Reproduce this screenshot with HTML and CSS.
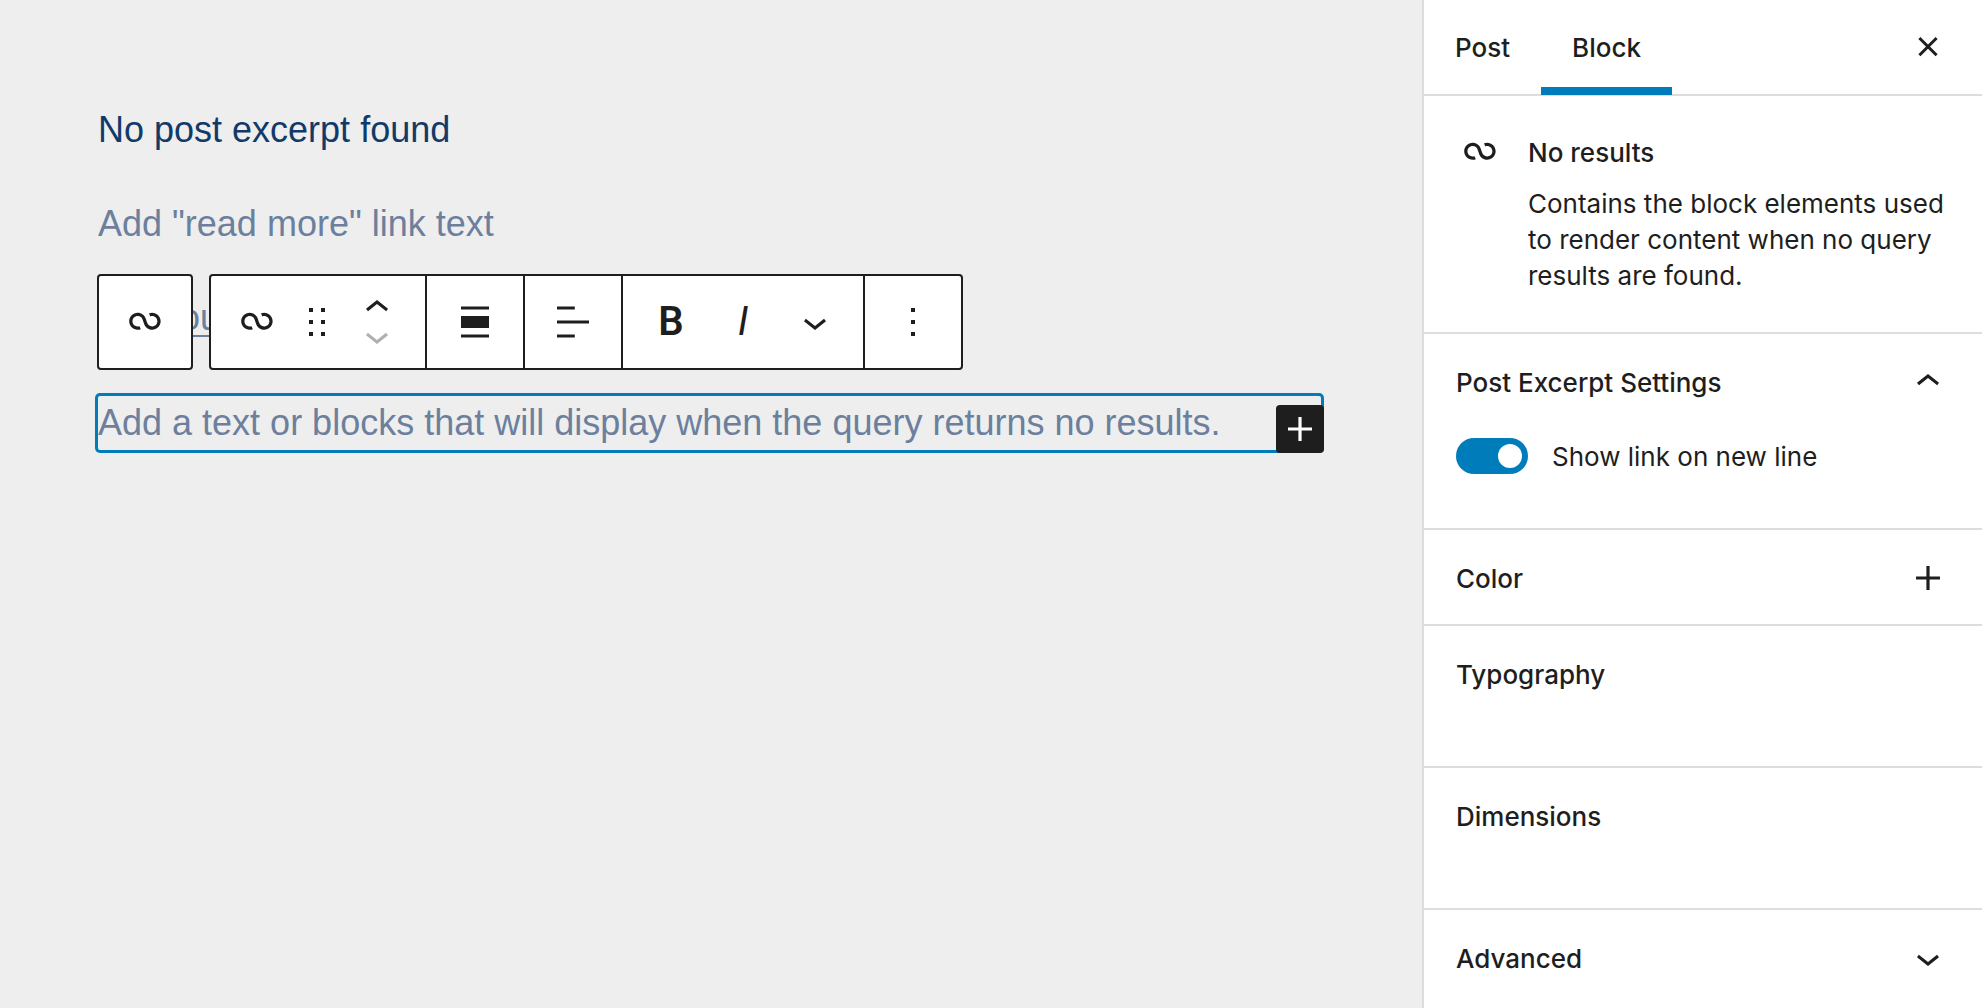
FILE: index.html
```
<!DOCTYPE html>
<html lang="en">
<head>
  <meta charset="UTF-8">
  <title>Edit Post</title>
  <link rel="stylesheet" href="styles.css">
</head>
<body>

  <div class="editor">
    <main class="canvas">
      <p class="excerpt">No post excerpt found</p>
      <p class="placeholder">Add "read more" link text</p>

      <div class="pagination">
        <a href="#" class="page-link">Previous Page</a>

        <!-- Block toolbar floats over the pagination links -->
        <div class="toolbars">
          <div class="toolbar">
            <button class="tool parent" aria-label="Select parent block">
              <svg class="icon" viewBox="0 0 24 24"><use href="#loop"/></svg>
            </button>
          </div>
          <div class="toolbar">
            <div class="group block-group">
              <button class="tool" aria-label="No results">
                <svg class="icon" viewBox="0 0 24 24"><use href="#loop"/></svg>
              </button>
              <button class="tool" aria-label="Drag">
                <svg class="icon" viewBox="0 0 24 24"><path d="M8 7h2V5H8v2zm0 6h2v-2H8v2zm0 6h2v-2H8v2zm6-14v2h2V5h-2zm0 8h2v-2h-2v2zm0 6h2v-2h-2v2z"/></svg>
              </button>
              <div class="movers">
                <button class="mover" aria-label="Move up">
                  <svg class="chevron" viewBox="6 7 12 8"><path d="M6.5 12.4L12 8l5.5 4.4-.9 1.2L12 10l-4.5 3.6-1-1.2z"/></svg>
                </button>
                <button class="mover" aria-label="Move down" disabled>
                  <svg class="chevron" viewBox="6 9 12 8"><path d="M17.5 11.6L12 16l-5.5-4.4.9-1.2L12 14l4.5-3.6 1 1.2z"/></svg>
                </button>
              </div>
            </div>
            <div class="group">
              <button class="tool wide" aria-label="Align">
                <svg class="icon" viewBox="0 0 24 24"><path d="M5 15h14V9H5v6zm0 4.75h14v-1.5H5v1.5zM5 4.25v1.5h14v-1.5H5z"/></svg>
              </button>
            </div>
            <div class="group">
              <button class="tool wide" aria-label="Align text">
                <svg class="icon" viewBox="0 0 24 24"><path d="M4 19.75h8.9v-1.5H4v1.5zm8.9-15.5H4v1.5h8.9v-1.5zM4 11.25v1.5h16v-1.5H4z"/></svg>
              </button>
            </div>
            <div class="group format-group">
              <button class="tool letter bold" aria-label="Bold">B</button>
              <button class="tool letter italic" aria-label="Italic">I</button>
              <button class="tool" aria-label="More formatting">
                <svg class="icon" viewBox="0 0 24 24"><use href="#chevron-down"/></svg>
              </button>
            </div>
            <div class="group">
              <button class="tool wide" aria-label="Options">
                <svg class="icon" viewBox="0 0 24 24"><path d="M13 19h-2v-2h2v2zm0-6h-2v-2h2v2zm0-6h-2V5h2v2z"/></svg>
              </button>
            </div>
          </div>
        </div>
      </div>

      <div class="selected-block">
        <p class="placeholder">Add a text or blocks that will display when the query returns no results.</p>
        <button class="inserter" aria-label="Add block">
          <svg class="icon" viewBox="0 0 24 24"><use href="#plus"/></svg>
        </button>
      </div>
    </main>

    <aside class="sidebar">
      <header class="tabs">
        <button class="tab">Post</button>
        <button class="tab active">Block</button>
        <button class="close" aria-label="Close settings">
          <svg class="icon" viewBox="0 0 24 24"><path d="M7.7 7.5l8.6 8.6M16.3 7.5l-8.6 8.6" fill="none" stroke="currentColor" stroke-width="1.5"/></svg>
        </button>
      </header>

      <section class="block-card">
        <svg class="icon" viewBox="0 0 24 24"><use href="#loop"/></svg>
        <div class="card-text">
          <h2>No results</h2>
          <p>Contains the block elements used to render content when no query results are found.</p>
        </div>
      </section>

      <section class="panel excerpt-panel">
        <button class="panel-title">Post Excerpt Settings
          <svg class="icon" viewBox="0 0 24 24"><path d="M6.5 12.4L12 8l5.5 4.4-.9 1.2L12 10l-4.5 3.6-1-1.2z"/></svg>
        </button>
        <div class="toggle-row">
          <input type="checkbox" class="toggle" id="newLine" checked>
          <label for="newLine">Show link on new line</label>
        </div>
      </section>

      <section class="panel">
        <button class="panel-title">Color
          <svg class="icon" viewBox="0 0 24 24"><use href="#plus"/></svg>
        </button>
      </section>

      <section class="panel tall">
        <h2 class="panel-title">Typography</h2>
      </section>

      <section class="panel tall">
        <h2 class="panel-title">Dimensions</h2>
      </section>

      <section class="panel">
        <button class="panel-title">Advanced
          <svg class="icon" viewBox="0 0 24 24"><use href="#chevron-down"/></svg>
        </button>
      </section>
    </aside>
  </div>

  <!-- Shared icons -->
  <svg class="sprite" width="0" height="0">
    <symbol id="loop" viewBox="0 0 24 24"><path d="M18.1823 11.6392C18.1823 13.0804 17.0139 14.2487 15.5727 14.2487C14.3579 14.2487 13.335 13.4179 13.0453 12.2922L13.0377 12.2625L13.0278 12.2335L12.3985 10.377L12.3942 10.3785C11.8571 8.64997 10.246 7.39405 8.33961 7.39405C5.99509 7.39405 4.09448 9.29465 4.09448 11.6392C4.09448 13.9837 5.99509 15.8843 8.33961 15.8843C8.88499 15.8843 9.40822 15.781 9.88943 15.5923L9.29212 14.0697C8.99812 14.185 8.67729 14.2487 8.33961 14.2487C6.89838 14.2487 5.73003 13.0804 5.73003 11.6392C5.73003 10.1979 6.89838 9.02959 8.33961 9.02959C9.55444 9.02959 10.5773 9.86046 10.867 10.9862L10.8772 10.9836L11.4695 12.7311C11.9515 14.546 13.6048 15.8843 15.5727 15.8843C17.9172 15.8843 19.8178 13.9837 19.8178 11.6392C19.8178 9.29465 17.9172 7.39404 15.5727 7.39404C15.0287 7.39404 14.5066 7.4968 14.0264 7.6847L14.6223 9.20781C14.9158 9.093 15.2358 9.02959 15.5727 9.02959C17.0139 9.02959 18.1823 10.1979 18.1823 11.6392Z"/></symbol>
    <symbol id="plus" viewBox="0 0 24 24"><path d="M18 11.2h-5.2V6h-1.6v5.2H6v1.6h5.2V18h1.6v-5.2H18z"/></symbol>
    <symbol id="chevron-down" viewBox="0 0 24 24"><path d="M17.5 11.6L12 16l-5.5-4.4.9-1.2L12 14l4.5-3.6 1 1.2z"/></symbol>
  </svg>

</body>
</html>
```
FILE: styles.css
```
* {
  box-sizing: border-box;
}
body {
  margin: 0;
  font-family: Inter, sans-serif;
  font-size: 26px;
  color: #1e1e1e;
  background-color: #eee;
}
h2, p {
  margin: 0;
}
button {
  font: inherit;
  color: inherit;
  background: none;
  border: none;
  padding: 0;
  cursor: pointer;
}
.icon {
  display: block;
  flex: none;
  width: 48px;
  height: 48px;
  fill: currentColor;
}
.sprite {
  position: absolute;
}
.editor {
  display: flex;
  min-height: 100vh;
}

/* Canvas */
.canvas {
  flex: 1;
  min-width: 0;
  padding: 103px 101px 0 98px;
  font-family: "Liberation Sans", Arial, sans-serif;
  font-size: 36px;
  line-height: 54px;
}
.excerpt {
  color: #113a69;
  margin-bottom: 40px;
}
.placeholder {
  color: #6c809d;
}
.pagination {
  position: relative;
  margin: 40px 0 51px;
}
.page-link {
  color: #6c809d;
  text-decoration-thickness: 2px;
  text-underline-offset: 5px;
}
.toolbars {
  position: absolute;
  top: -17px;
  left: -1px;
  display: flex;
  gap: 16px;
}
.toolbar {
  display: flex;
  height: 96px;
  background-color: #fff;
  border: 2px solid #1e1e1e;
  border-radius: 4px;
  color: #1e1e1e;
}
.group {
  display: flex;
}
.group + .group {
  border-left: 2px solid #1e1e1e;
}
.block-group {
  padding: 0 18px 0 16px;
}
.format-group {
  padding: 0 12px;
}
.tool {
  display: flex;
  align-items: center;
  justify-content: center;
  width: 60px;
}
.tool.parent {
  width: 92px;
}
.tool.wide {
  width: 96px;
}
.format-group .tool {
  width: 72px;
}
.letter {
  font-family: Roboto, sans-serif;
  font-size: 40px;
}
.bold {
  font-weight: 600;
}
.italic {
  font-style: italic;
}
.movers {
  display: flex;
  flex-direction: column;
  justify-content: center;
  width: 60px;
}
.mover {
  display: flex;
  align-items: center;
  justify-content: center;
  height: 32px;
}
.mover:disabled {
  color: #b0b0b0;
}
.chevron {
  width: 24px;
  height: 16px;
  fill: currentColor;
}
.selected-block {
  position: relative;
  border-radius: 2px;
  box-shadow: 0 0 0 3px #007cba;
}
.inserter {
  position: absolute;
  right: -3px;
  bottom: -3px;
  color: #fff;
  background-color: #1e1e1e;
  border-radius: 4px;
}

/* Settings sidebar */
.sidebar {
  flex: none;
  width: 560px;
  background-color: #fff;
  border-left: 2px solid #ddd;
}
.tabs {
  display: flex;
  height: 96px;
  border-bottom: 2px solid #ddd;
}
.tab {
  padding: 0 31px;
  font-weight: 500;
}
.tab.active {
  margin-bottom: -1px;
  box-shadow: inset 0 -8px 0 #007cba;
}
.close {
  margin: 0 30px 0 auto;
}
.block-card {
  display: flex;
  gap: 24px;
  padding: 32px 32px 38px;
}
h2 {
  font-size: 26px;
  font-weight: 500;
}
.card-text h2 {
  line-height: 50px;
  margin-bottom: 8px;
}
.card-text p {
  line-height: 36px;
}
.panel {
  border-top: 2px solid #ddd;
}
.panel-title {
  display: flex;
  align-items: center;
  justify-content: space-between;
  width: 100%;
  height: 94px;
  padding: 2px 30px 0 32px;
  font-weight: 500;
  text-align: left;
}
.excerpt-panel {
  padding-bottom: 54px;
}
.tall {
  padding-bottom: 46px;
}
.toggle-row {
  display: flex;
  align-items: center;
  gap: 24px;
  padding: 10px 32px 0;
}
.toggle {
  appearance: none;
  width: 72px;
  height: 36px;
  margin: 0;
  padding: 6px;
  border-radius: 18px;
  background-color: #949494;
}
.toggle::before {
  content: "";
  display: block;
  width: 24px;
  height: 24px;
  border-radius: 50%;
  background-color: #fff;
}
.toggle:checked {
  background-color: #007cba;
}
.toggle:checked::before {
  margin-left: auto;
}
```
